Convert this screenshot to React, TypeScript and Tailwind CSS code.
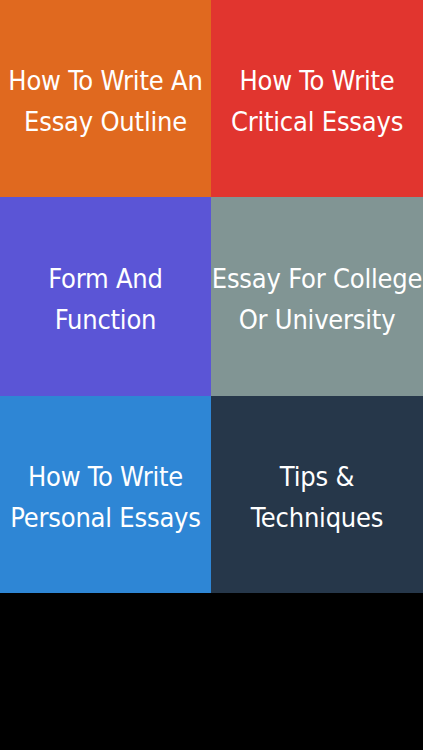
const tiles = [
  { title: ["How To Write An", "Essay Outline"], bg: "bg-[#e0691f]" },
  { title: ["How To Write", "Critical Essays"], bg: "bg-[#e1352f]" },
  { title: ["Form And", "Function"], bg: "bg-[#5b55d6]" },
  { title: ["Essay For College", "Or University"], bg: "bg-[#819594]" },
  { title: ["How To Write", "Personal Essays"], bg: "bg-[#2e86d5]" },
  { title: ["Tips &", "Techniques"], bg: "bg-[#26374a]" },
];

export default function App() {
  return (
    <div className="w-[423px] h-[750px] bg-black overflow-hidden">
      <div className="grid grid-cols-[211px_212px] grid-rows-[197px_199px_197px]">
        {tiles.map((t, i) => (
          <div
            key={i}
            className={`${t.bg} flex flex-col items-center justify-center pt-[4px] text-white text-[27px] leading-[41px] tracking-[-0.2px] whitespace-nowrap font-['DejaVu_Sans_Condensed','DejaVu_Sans',sans-serif]`}
          >
            {t.title.map((line) => (
              <span key={line}>{line}</span>
            ))}
          </div>
        ))}
      </div>
    </div>
  );
}
